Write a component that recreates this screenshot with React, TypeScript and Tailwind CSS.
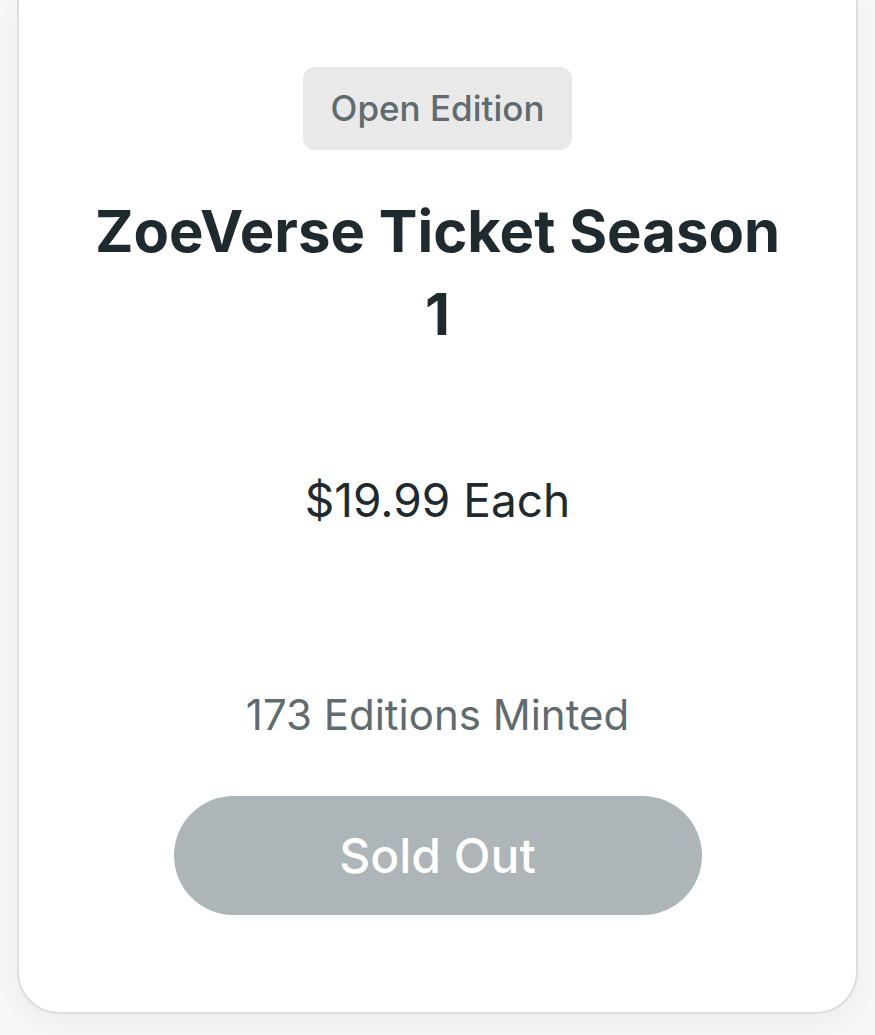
import React from 'react';

const App: React.FC = () => {
  return (
    <div className="min-h-[1035px] w-full bg-[#f6f6f6] px-[17px] pb-[21px]" style={{ fontFamily: 'Inter, "Noto Sans", sans-serif' }}>
      <div className="flex flex-col items-center rounded-b-[42px] border-2 border-t-0 border-[#dddddd] bg-white pt-[67px] pb-[97px] shadow-[0_8px_24px_rgba(0,0,0,0.04)]">
        <span className="flex h-[83px] w-[269px] items-center justify-center rounded-[12px] bg-[#e9e9e9] text-[35px] font-medium text-[#5f6b6e]">
          Open Edition
        </span>
        <h1 className="mt-[40px] px-[70px] text-center text-[58px] font-bold leading-[83px] text-[#1f2a2e]">
          ZoeVerse Ticket Season 1
        </h1>
        <p className="mt-[110px] text-[46px] leading-[69px] text-[#1f2a2e]">$19.99 Each</p>
        <p className="mt-[148px] text-[42px] leading-[63px] text-[#5f6b6e]">173 Editions Minted</p>
        <button className="mt-[50px] flex h-[119px] w-[528px] items-center justify-center rounded-full bg-[#adb5b8] text-[48px] font-medium text-white">
          Sold Out
        </button>
      </div>
    </div>
  );
};

export default App;
